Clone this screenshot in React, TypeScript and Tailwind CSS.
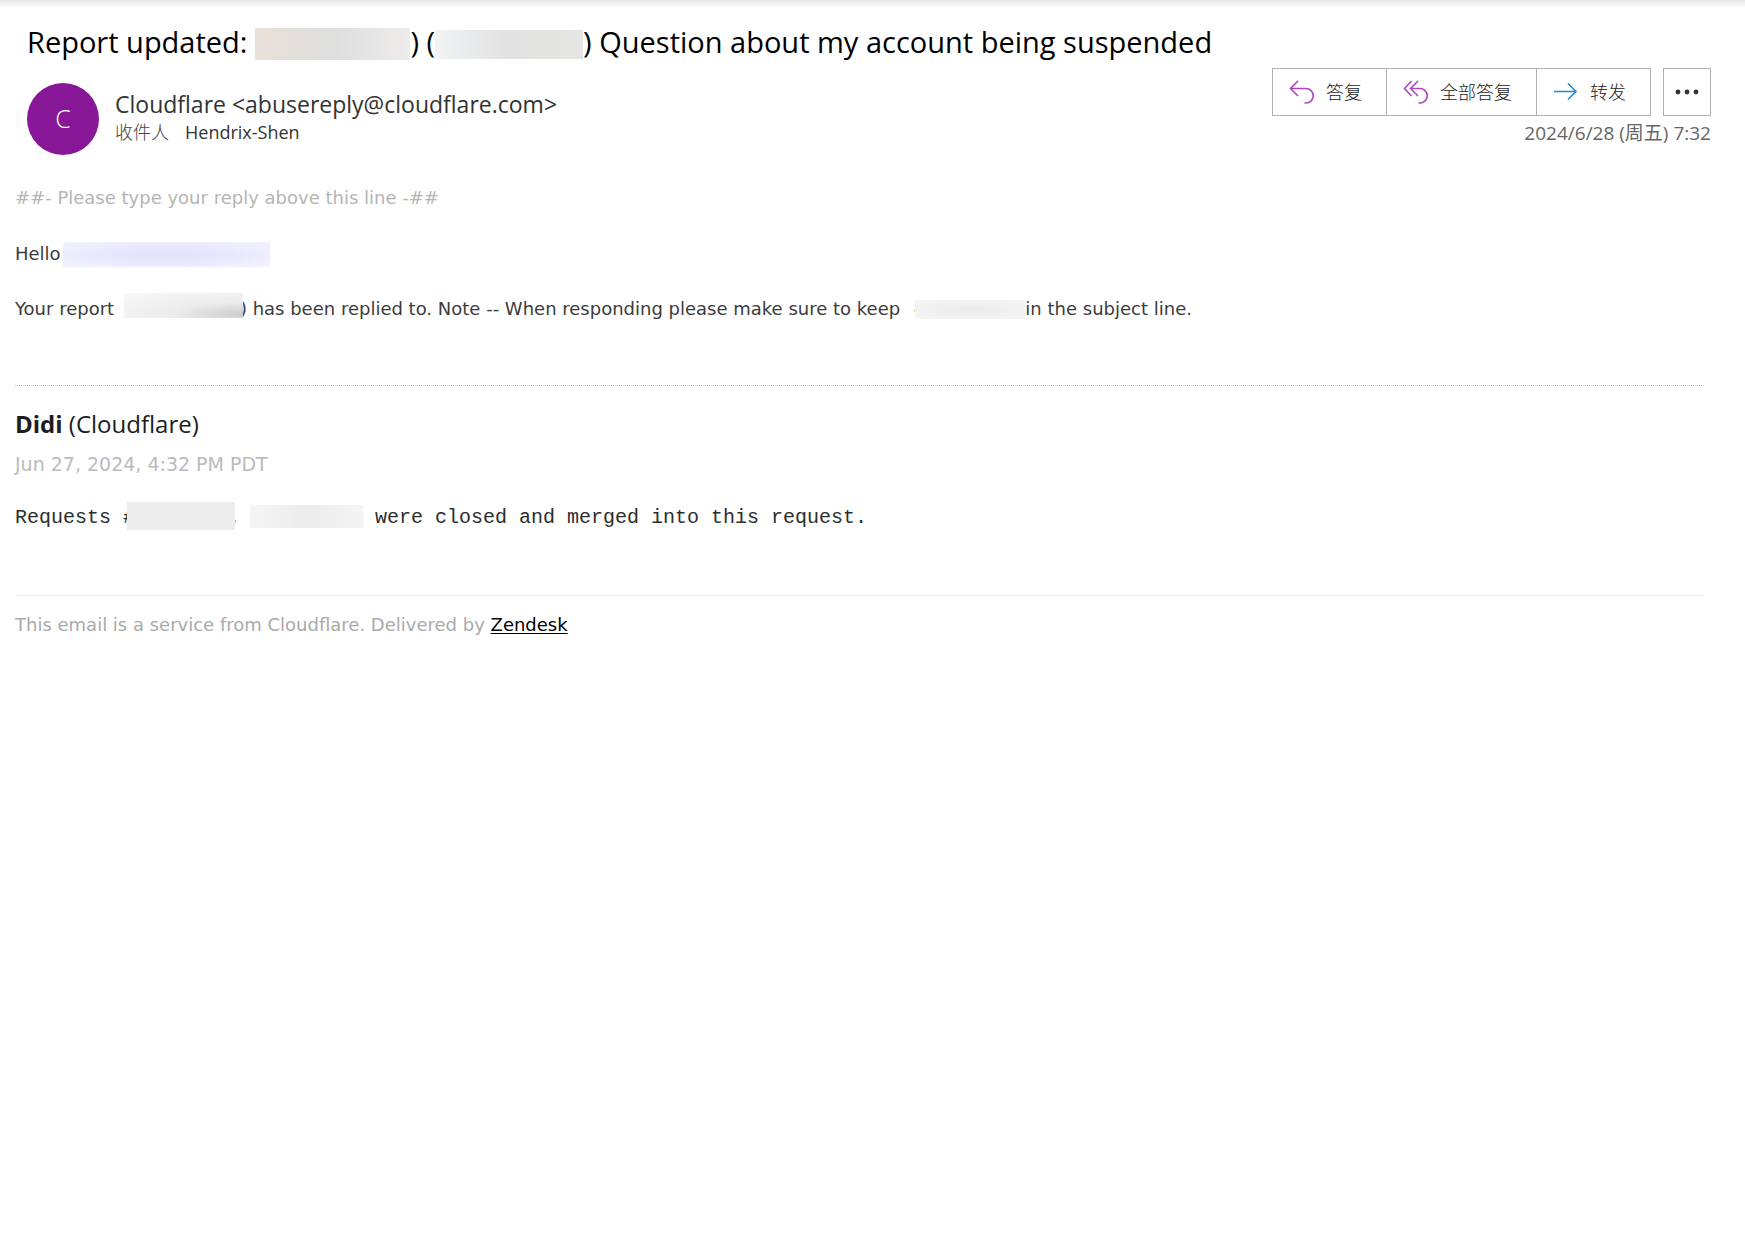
import type { ReactNode } from "react";

const UI_FONT = "font-['Open_Sans','Noto_Sans_CJK_SC',sans-serif]";
const BODY_FONT = "font-['DejaVu_Sans','Noto_Sans_CJK_SC',sans-serif]";

interface ActionButtonProps {
  icon: ReactNode;
  label: string;
}

function ReplyIcon() {
  return (
    <svg width="26" height="26" viewBox="0 0 26 26" fill="none" stroke="#b146c2" strokeWidth="1.6">
      <path d="M9 2 1.5 9.5 9 17M1.5 9.5H17a7 7 0 0 1 0 14.5h-1.5" />
    </svg>
  );
}

function ReplyAllIcon() {
  return (
    <svg width="26" height="26" viewBox="0 0 26 26" fill="none" stroke="#b146c2" strokeWidth="1.6">
      <path d="M8.5 2 1.5 9.5 8.5 17" />
      <path d="M15 2 7.5 9.5 15 17M7.5 9.5H17a7 7 0 0 1 0 14.5h-1.5" />
    </svg>
  );
}

function ForwardIcon() {
  return (
    <svg width="26" height="26" viewBox="0 0 26 26" fill="none" stroke="#1e8bcd" strokeWidth="1.6">
      <path d="M1 12.5h22M15 4.5l8 8-8 8" />
    </svg>
  );
}

function ActionButton({ icon, label }: ActionButtonProps) {
  return (
    <button
      type="button"
      className="flex h-full items-center gap-[11px] border-r border-[#b0b0b0] pl-4 pr-6 text-[18px] font-light text-[#222] last:border-r-0 hover:bg-gray-100"
    >
      {icon}
      {label}
    </button>
  );
}

function MessageHeader() {
  return (
    <header className={`pl-[27px] pr-[34px] pt-3.5 ${UI_FONT}`}>
      <h1 className="flex items-center text-[29px] leading-[40px] text-black">
        <span>Report updated:</span>
        <span className="ml-2 mt-1 h-8 w-[155px] bg-linear-to-r from-[#e9e0d8] via-[#dedede] to-[#eeeceb]" />
        <span className="whitespace-pre">) (</span>
        <span className="mt-1 h-[29px] w-[148px] bg-linear-to-r from-[#f1f3f5] via-[#e2e2e2] to-[#e6e6e4]" />
        <span className="whitespace-pre">) Question about my account being suspended</span>
      </h1>
      <div className="flex items-start justify-between pt-1.5">
        <div className="flex items-center gap-4 pt-[15px]">
          <div className="flex size-[72px] items-center justify-center rounded-full bg-[#881798] text-[25px] font-light text-white">
            C
          </div>
          <div className="pb-1 text-[#333]">
            <div className="text-[23px] leading-[30px]">Cloudflare &lt;abusereply@cloudflare.com&gt;</div>
            <div className="flex gap-4 text-[18px] leading-[26px]">
              <span className="font-light text-[#444]">收件人</span>
              <span>Hendrix-Shen</span>
            </div>
          </div>
        </div>
        <div className="flex flex-col items-end">
          <div className="flex gap-3">
            <div className="flex h-12 border border-[#b0b0b0]">
              <ActionButton icon={<ReplyIcon />} label="答复" />
              <ActionButton icon={<ReplyAllIcon />} label="全部答复" />
              <ActionButton icon={<ForwardIcon />} label="转发" />
            </div>
            <button
              type="button"
              aria-label="更多"
              className="flex size-12 items-center justify-center border border-[#b0b0b0] hover:bg-gray-100"
            >
              <svg width="24" height="6" viewBox="0 0 24 6" fill="#333">
                <circle cx="3" cy="3" r="2.4" />
                <circle cx="12" cy="3" r="2.4" />
                <circle cx="21" cy="3" r="2.4" />
              </svg>
            </button>
          </div>
          <time className="pt-1 text-[19px] leading-[26px] text-[#666]">2024/6/28 (周五) 7:32</time>
        </div>
      </div>
    </header>
  );
}

function MessageBody() {
  return (
    <main className={`pl-[15px] pr-[41px] pt-[29px] text-[18px] leading-[28px] text-[#3c3c3c] ${BODY_FONT}`}>
      <p className="text-[#b5b5b5]">##- Please type your reply above this line -##</p>
      <p className="mt-7 flex items-center">
        Hello
        <span className="ml-0.5 h-[25px] w-[207px] bg-radial from-[#e0e0fd] to-[#f3f3fe]" />
      </p>
      <p className="mt-[27px] flex items-center whitespace-pre">
        {"Your report "}
        <span className="ml-1">(</span>
        <span className="relative -mt-1 mb-1 -ml-[7px] h-[25px] w-[119px] bg-radial-[at_100%_85%] from-[#cccccc] via-[#ececec] via-40% to-[#f8f8f8]" />
        <span className="-ml-[3px]">
          {") has been replied to. Note -- When responding please make sure to keep "}
        </span>
        <span className="ml-2">-</span>
        <span className="relative -ml-[5px] h-[19px] w-[110px] bg-radial from-[#ebebeb] to-[#f6f6f6]" />
        in the subject line.
      </p>

      <section className="mt-[62px] border-t border-dotted border-[#bbb] pt-[22px]">
        <h2 className="font-['Open_Sans',sans-serif] text-[24px] leading-[32px] text-[#1b1d1e]">
          <strong className="font-bold">Didi</strong> (Cloudflare)
        </h2>
        <p className="mt-2 text-[19px] leading-[32px] text-[#bbb]">Jun 27, 2024, 4:32 PM PDT</p>
        <p className="mt-[22px] flex items-center whitespace-pre font-['Liberation_Mono',monospace] text-[20px] leading-[32px] text-[#2b2e2f]">
          {"Requests #"}
          <span className="relative mb-1 -ml-2 h-[28px] w-[108px] bg-[#ededed]" />
          <span className="-ml-1.5 w-[21px]">,</span>
          <span className="mb-1 h-[23px] w-[113px] bg-linear-to-r from-[#f5f5f5] via-[#ececec] to-[#f4f4f4]" />
          {" were closed and merged into this request."}
        </p>
      </section>

      <footer className="mt-[61px] border-t border-[#eee] pt-[15px] text-[#aaa]">
        This email is a service from Cloudflare. Delivered by{" "}
        <a href="#zendesk" className="text-black underline underline-offset-2">
          Zendesk
        </a>
      </footer>
    </main>
  );
}

export default function App() {
  return (
    <div className="min-h-screen bg-white">
      <div className="h-2 bg-linear-to-b from-[#e6e6e6] to-white" />
      <MessageHeader />
      <MessageBody />
    </div>
  );
}
